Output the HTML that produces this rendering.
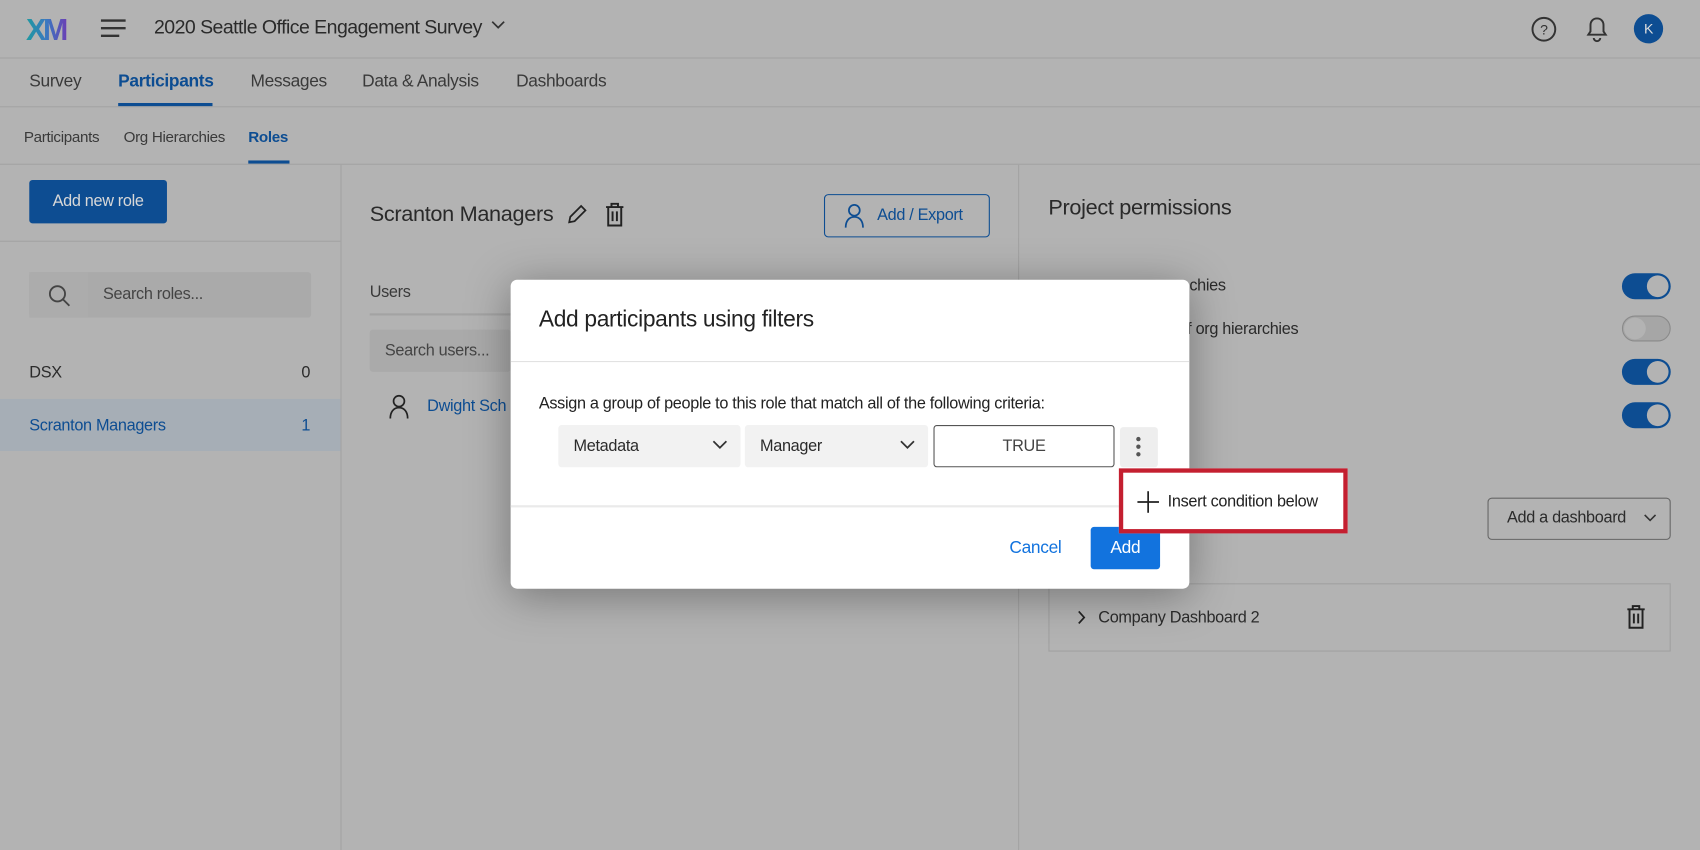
<!DOCTYPE html>
<html><head><meta charset="utf-8"><style>
*{margin:0;padding:0;box-sizing:border-box}
html,body{width:1700px;height:850px;overflow:hidden;background:#b3b3b3}
#w{position:absolute;left:0;top:0;width:1568px;height:784px;transform:scale(1.08418);transform-origin:0 0;font-family:"Liberation Sans",sans-serif;color:#2b2b2b;letter-spacing:-0.3px;background:#b3b3b3}
.a{position:absolute;white-space:nowrap}
.line{position:absolute;background:#a3a3a3}
.tg{position:absolute;width:45px;height:24px;border-radius:12px;background:#0d4d92}
.tg::after{content:"";position:absolute;right:2px;top:2px;width:20px;height:20px;border-radius:50%;background:#b3b3b3}
.tg.off{background:#a6a6a6;border:1px solid #8a8a8a}
.tg.off::after{left:1px;right:auto;top:1px}
.sel{position:absolute;background:#f2f2f2;border-radius:3px;font-size:15px;padding:11px 0 0 14px;height:39px}
.sel svg{position:absolute;right:12px;top:14px}
</style></head><body><div id="w">
<!-- top bar -->
<svg class="a" style="left:24px;top:11px" width="46" height="30"><defs><linearGradient id="g" x1="0" x2="1"><stop offset="0" stop-color="#1f9aa0"/><stop offset=".5" stop-color="#3a78c0"/><stop offset="1" stop-color="#6b3fb5"/></linearGradient></defs><text x="0" y="26" font-family="Liberation Sans" font-weight="bold" font-size="28" letter-spacing="-3" fill="url(#g)">XM</text></svg>
<svg class="a" style="left:93px;top:17px" width="23" height="18"><g stroke="#333" stroke-width="2.2"><line x1="0" y1="2" x2="23" y2="2"/><line x1="0" y1="9" x2="23" y2="9"/><line x1="0" y1="16" x2="17" y2="16"/></g></svg>
<div class="a" style="left:142px;top:15px;font-size:18px;color:#2a2a2a;letter-spacing:-0.5px">2020 Seattle Office Engagement Survey<svg style="margin-left:9px;vertical-align:3px" width="13" height="9"><path d="M1 1l5.5 5.5L12 1" stroke="#333" stroke-width="1.6" fill="none"/></svg></div>
<svg class="a" style="left:1412px;top:15px" width="24" height="24"><circle cx="12" cy="12" r="10.5" stroke="#333" stroke-width="1.8" fill="none"/><text x="12" y="17" font-size="13" text-anchor="middle" font-family="Liberation Sans" fill="#333">?</text></svg>
<svg class="a" style="left:1462px;top:14px" width="22" height="25"><path d="M11 3c-4 0-6 3-6 6v6l-2 3h16l-2-3V9c0-3-2-6-6-6z" stroke="#333" stroke-width="1.8" fill="none"/><path d="M8 21a3 3 0 006 0" stroke="#333" stroke-width="1.8" fill="none"/></svg>
<div class="a" style="left:1507px;top:13px;width:27px;height:27px;border-radius:50%;background:#0d4d92;color:#ddd;font-size:13px;text-align:center;line-height:27px">K</div>
<div class="line" style="left:0;top:53px;width:1568px;height:1px"></div>
<!-- tabs -->
<div class="a" style="left:27px;top:67px;font-size:16px;color:#3a3a3a">Survey</div>
<div class="a" style="left:109px;top:67px;font-size:16px;font-weight:bold;color:#0d4d92">Participants</div>
<div class="a" style="left:109px;top:95px;width:87px;height:3px;background:#0d4d92"></div>
<div class="a" style="left:231px;top:67px;font-size:16px;color:#3a3a3a">Messages</div>
<div class="a" style="left:334px;top:67px;font-size:16px;color:#3a3a3a">Data &amp; Analysis</div>
<div class="a" style="left:476px;top:67px;font-size:16px;color:#3a3a3a">Dashboards</div>
<div class="line" style="left:0;top:98px;width:1568px;height:1px"></div>
<div class="a" style="left:22px;top:118px;font-size:14px;color:#3a3a3a">Participants</div>
<div class="a" style="left:114px;top:118px;font-size:14px;color:#3a3a3a">Org Hierarchies</div>
<div class="a" style="left:229px;top:118px;font-size:14px;font-weight:bold;color:#0d4d92">Roles</div>
<div class="a" style="left:229px;top:148px;width:38px;height:3px;background:#0d4d92"></div>
<div class="line" style="left:0;top:151px;width:1568px;height:1px"></div>
<!-- left column -->
<div class="line" style="left:314px;top:152px;width:1px;height:632px"></div>
<div class="a" style="left:27px;top:166px;width:127px;height:40px;background:#0d4d92;border-radius:3px;color:#d8d8d8;font-size:15px;text-align:center;line-height:40px">Add new role</div>
<div class="line" style="left:0;top:222px;width:314px;height:1px"></div>
<div class="a" style="left:27px;top:251px;width:260px;height:42px;background:#aaaaaa;border-radius:3px"></div>
<div class="a" style="left:27px;top:251px;width:54px;height:42px;background:#acacac"></div>
<svg class="a" style="left:44px;top:262px" width="22" height="22"><circle cx="9" cy="9" r="7" stroke="#444" stroke-width="1.7" fill="none"/><line x1="14" y1="14" x2="20" y2="20" stroke="#444" stroke-width="1.7"/></svg>
<div class="a" style="left:95px;top:263px;font-size:15px;color:#444">Search roles...</div>
<div class="a" style="left:27px;top:335px;font-size:15px">DSX</div>
<div class="a" style="left:278px;top:335px;font-size:15px">0</div>
<div class="a" style="left:0;top:368px;width:314px;height:48px;background:#a6aeb6"></div>
<div class="a" style="left:27px;top:384px;font-size:15px;color:#0d4d92">Scranton Managers</div>
<div class="a" style="left:278px;top:384px;font-size:15px;color:#0d4d92">1</div>
<!-- middle -->
<div class="a" style="left:341px;top:187px;font-size:20px;color:#2a2a2a">Scranton Managers</div>
<svg class="a" style="left:522px;top:188px" width="20" height="20"><path d="M3 17l1-5L14 2l4 4L8 16z" stroke="#222" stroke-width="1.6" fill="none"/></svg>
<svg class="a" style="left:557px;top:186px" width="20" height="24"><path d="M2 5h16M7 5V2h6v3M4 5v17h12V5M8 9v9M12 9v9" stroke="#222" stroke-width="1.8" fill="none"/></svg>
<div class="a" style="left:760px;top:179px;width:153px;height:40px;border:1.5px solid #0d4d92;border-radius:4px"></div>
<svg class="a" style="left:778px;top:187px" width="20" height="24"><circle cx="10" cy="7" r="5" stroke="#0d4d92" stroke-width="1.6" fill="none"/><path d="M2 23c0-6 3-10 8-10s8 4 8 10" stroke="#0d4d92" stroke-width="1.6" fill="none"/></svg>
<div class="a" style="left:809px;top:190px;font-size:15px;color:#0d4d92">Add / Export</div>
<div class="a" style="left:341px;top:261px;font-size:15px;color:#3a3a3a">Users</div>
<div class="line" style="left:341px;top:289px;width:130px;height:2px"></div>
<div class="a" style="left:341px;top:304px;width:130px;height:39px;background:#aaaaaa;border-radius:3px"></div>
<div class="a" style="left:355px;top:315px;font-size:15px;color:#444">Search users...</div>
<svg class="a" style="left:358px;top:363px" width="20" height="24"><circle cx="10" cy="7" r="5" stroke="#222" stroke-width="1.6" fill="none"/><path d="M2 23c0-6 3-10 8-10s8 4 8 10" stroke="#222" stroke-width="1.6" fill="none"/></svg>
<div class="a" style="left:394px;top:366px;font-size:15px;color:#0d4d92">Dwight Sch</div>
<!-- right -->
<div class="line" style="left:939px;top:152px;width:1px;height:632px"></div>
<div class="a" style="left:967px;top:181px;font-size:20px;color:#2a2a2a">Project permissions</div>
<div class="a" style="left:1097px;top:255px;font-size:15px">chies</div>
<div class="a" style="left:1095px;top:295px;font-size:15px">f org hierarchies</div>
<div class="tg" style="left:1496px;top:252px"></div>
<div class="tg off" style="left:1496px;top:291px"></div>
<div class="tg" style="left:1496px;top:331px"></div>
<div class="tg" style="left:1496px;top:371px"></div>
<div class="a" style="left:1372px;top:459px;width:169px;height:39px;border:1px solid #666;border-radius:4px"></div>
<div class="a" style="left:1390px;top:469px;font-size:15px">Add a dashboard</div>
<svg class="a" style="left:1516px;top:474px" width="12" height="8"><path d="M1 1l5 5 5-5" stroke="#333" stroke-width="1.5" fill="none"/></svg>
<div class="a" style="left:967px;top:538px;width:574px;height:63px;border:1px solid #a0a0a0"></div>
<svg class="a" style="left:994px;top:563px" width="8" height="13"><path d="M1 1l5 5.5L1 12" stroke="#222" stroke-width="1.6" fill="none"/></svg>
<div class="a" style="left:1013px;top:561px;font-size:15px">Company Dashboard 2</div>
<svg class="a" style="left:1499px;top:557px" width="20" height="24"><path d="M2 5h16M7 5V2h6v3M4 5v17h12V5M8 9v9M12 9v9" stroke="#222" stroke-width="1.8" fill="none"/></svg>
<!-- modal -->
<div class="a" style="left:471px;top:258px;width:626px;height:285px;background:#fff;border-radius:6px;box-shadow:0 6px 40px rgba(0,0,0,.35)"></div>
<div class="a" style="left:497px;top:283px;font-size:21px;color:#222">Add participants using filters</div>
<div class="a" style="left:471px;top:333px;width:626px;height:1px;background:#e2e2e2"></div>
<div class="a" style="left:497px;top:364px;font-size:15px;color:#222">Assign a group of people to this role that match all of the following criteria:</div>
<div class="sel" style="left:515px;top:392px;width:168px">Metadata<svg width="14" height="9"><path d="M1 1l6 6 6-6" stroke="#333" stroke-width="1.6" fill="none"/></svg></div>
<div class="sel" style="left:687px;top:392px;width:169px">Manager<svg width="14" height="9"><path d="M1 1l6 6 6-6" stroke="#333" stroke-width="1.6" fill="none"/></svg></div>
<div class="a" style="left:861px;top:392px;width:167px;height:39px;border:1px solid #555;border-radius:3px;font-size:15px;text-align:center;line-height:37px;color:#444">TRUE</div>
<div class="a" style="left:1033px;top:394px;width:35px;height:37px;background:#eee;border-radius:3px"></div>
<svg class="a" style="left:1047px;top:402px" width="6" height="20"><circle cx="3" cy="3" r="2" fill="#555"/><circle cx="3" cy="10" r="2" fill="#555"/><circle cx="3" cy="17" r="2" fill="#555"/></svg>
<div class="a" style="left:471px;top:466px;width:626px;height:2px;background:#eaeaea"></div>
<div class="a" style="left:931px;top:497px;font-size:16px;color:#1273de">Cancel</div>
<div class="a" style="left:1006px;top:486px;width:64px;height:39px;background:#1273de;border-radius:3px;color:#fff;font-size:16px;text-align:center;line-height:39px">Add</div>
<!-- red highlight -->
<div class="a" style="left:1032px;top:432px;width:211px;height:60px;background:#fff;border:4px solid #c41f30"></div>
<svg class="a" style="left:1049px;top:453px" width="20" height="20"><path d="M10 0v20M0 10h20" stroke="#222" stroke-width="1.6"/></svg>
<div class="a" style="left:1077px;top:454px;font-size:15px;color:#222">Insert condition below</div>
</div></body></html>
